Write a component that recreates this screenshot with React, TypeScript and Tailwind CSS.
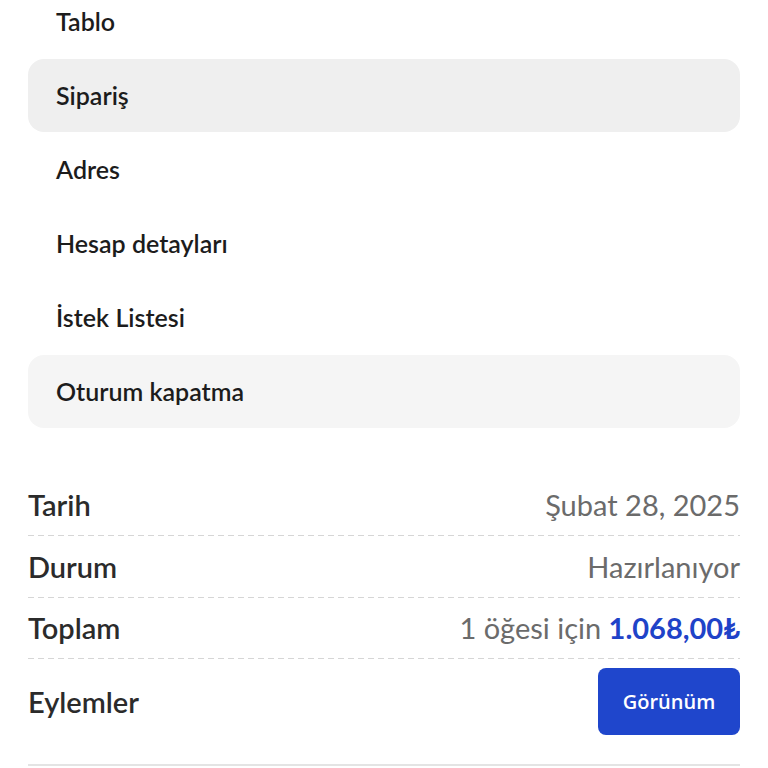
import React from "react";

const nav = [
  { label: "Tablo", bg: "" },
  { label: "Sipariş", bg: "bg-[#efefef]" },
  { label: "Adres", bg: "" },
  { label: "Hesap detayları", bg: "" },
  { label: "İstek Listesi", bg: "" },
  { label: "Oturum kapatma", bg: "bg-[#f5f5f5]" },
];

function Dash() {
  return (
    <div className="h-[1px] w-full bg-[repeating-linear-gradient(90deg,#d6d6d6_0_6px,transparent_6px_10px)]" />
  );
}

export default function App() {
  return (
    <div className="w-[768px] h-[768px] overflow-hidden bg-white font-['Lato',sans-serif]">
      <div className="px-[28px] -mt-[15px]">
        <ul className="flex flex-col gap-[1px]">
          {nav.map((n) => (
            <li
              key={n.label}
              className={`h-[73px] flex items-center pl-[28px] rounded-[16px] text-[25px] font-semibold text-[#1c1c1c] ${n.bg}`}
            >
              {n.label}
            </li>
          ))}
        </ul>
        <div className="mt-[47px] text-[29px] text-[#2b2b2b]">
          <div className="flex items-center justify-between h-[60px]">
            <span className="font-semibold">Tarih</span>
            <span className="text-[#6b6b6b]">Şubat 28, 2025</span>
          </div>
          <Dash />
          <div className="flex items-center justify-between h-[61px]">
            <span className="font-semibold">Durum</span>
            <span className="text-[#6b6b6b]">Hazırlanıyor</span>
          </div>
          <Dash />
          <div className="flex items-center justify-between h-[60px]">
            <span className="font-semibold">Toplam</span>
            <span className="text-[#6b6b6b]">
              1 öğesi için{" "}
              <span className="font-bold text-[#1f43c8]">1.068,00₺</span>
            </span>
          </div>
          <Dash />
          <div className="flex items-center justify-between h-[107px] border-b-2 border-[#e4e4e4] pb-[24px] pt-[4px]">
            <span className="font-semibold">Eylemler</span>
            <button className="w-[142px] h-[67px] rounded-[8px] bg-[#1f46cc] text-white text-[20px] font-semibold font-['Open_Sans',sans-serif]">
              Görünüm
            </button>
          </div>
        </div>
      </div>
    </div>
  );
}
